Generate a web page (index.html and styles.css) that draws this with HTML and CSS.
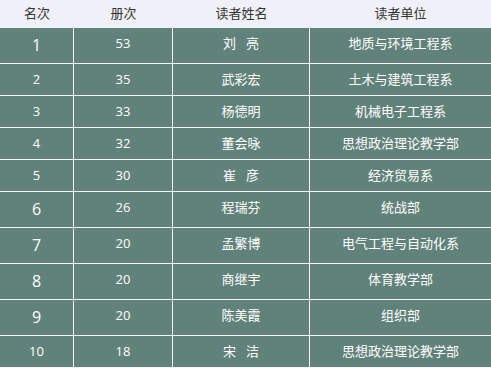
FILE: index.html
```html
<!DOCTYPE html>
<html lang="zh-CN">
<head>
<meta charset="utf-8">
<title>借阅排行</title>
<link rel="stylesheet" href="styles.css">
</head>
<body>
<div class="rank">
  <div class="head">
    <div>名次</div><div>册次</div><div>读者姓名</div><div>读者单位</div>
  </div>
  <div class="rows">
    <div class="c big">1</div><div class="c">53</div><div class="c">刘&nbsp;&nbsp;&nbsp;亮</div><div class="c">地质与环境工程系</div>
    <div class="c">2</div><div class="c">35</div><div class="c">武彩宏</div><div class="c">土木与建筑工程系</div>
    <div class="c">3</div><div class="c">33</div><div class="c">杨德明</div><div class="c">机械电子工程系</div>
    <div class="c">4</div><div class="c">32</div><div class="c">董会咏</div><div class="c">思想政治理论教学部</div>
    <div class="c">5</div><div class="c">30</div><div class="c">崔&nbsp;&nbsp;&nbsp;彦</div><div class="c">经济贸易系</div>
    <div class="c big">6</div><div class="c">26</div><div class="c">程瑞芬</div><div class="c">统战部</div>
    <div class="c big">7</div><div class="c">20</div><div class="c">孟繁博</div><div class="c">电气工程与自动化系</div>
    <div class="c big">8</div><div class="c">20</div><div class="c">商继宇</div><div class="c">体育教学部</div>
    <div class="c big">9</div><div class="c">20</div><div class="c">陈美霞</div><div class="c">组织部</div>
    <div class="c">10</div><div class="c">18</div><div class="c">宋&nbsp;&nbsp;&nbsp;洁</div><div class="c">思想政治理论教学部</div>
  </div>
</div>
</body>
</html>
```

FILE: styles.css
```css
html, body {
  margin: 0;
  padding: 0;
  background: #ffffff;
}
body {
  font-family: "Open Sans", "Noto Sans CJK SC", sans-serif;
  font-size: 13px;
  width: 491px;
  height: 368px;
  overflow: hidden;
}
.rank {
  width: 491px;
}
.head {
  display: grid;
  grid-template-columns: 74px 99px 137px 1fr;
  height: 28px;
  background: #f0f0f8;
  color: #333333;
}
.head div {
  text-align: center;
  line-height: 26px;
}
.rows {
  display: grid;
  grid-template-columns: 73px 98px 136px 1fr;
  gap: 1px;
  background: #f4f4f4;
  padding-bottom: 1px;
}
.c {
  background: #61827a;
  color: #ffffff;
  text-align: center;
  line-height: 31px;
}
.c.big {
  font-size: 16px;
  line-height: 35px;
}
```
